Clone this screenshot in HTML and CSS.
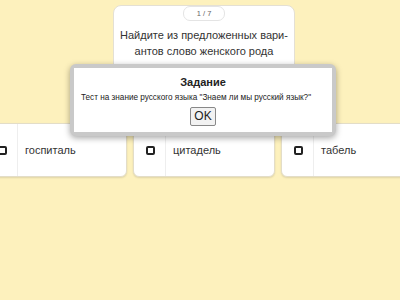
FILE: index.html
```html
<!DOCTYPE html>
<html lang="ru">
<head>
    <meta charset="UTF-8">
    <title>Тест</title>
    <link rel="stylesheet" href="styles.css">
</head>
<body>

    <!-- Question -->
    <div class="question-card">
        <div class="counter">1 / 7</div>
        <p class="question-text">Найдите из предложенных вари-<br>антов слово женского рода</p>
    </div>

    <!-- Answers -->
    <div class="options">
        <div class="option">
            <div class="check"><span class="box"></span></div>
            <div class="label">госпиталь</div>
        </div>
        <div class="option">
            <div class="check"><span class="box"></span></div>
            <div class="label">цитадель</div>
        </div>
        <div class="option">
            <div class="check"><span class="box"></span></div>
            <div class="label">табель</div>
        </div>
    </div>

    <!-- Alert dialog -->
    <div class="dialog">
        <div class="dialog-inner">
            <h1>Задание</h1>
            <p>Тест на знание русского языка "Знаем ли мы русский язык?"</p>
            <button>OK</button>
        </div>
    </div>

</body>
</html>
```

FILE: styles.css
```css
body {
    margin: 0;
    background: #fdf1bd;
    font-family: "Liberation Sans", Arial, sans-serif;
    color: #333;
    height: 300px;
    overflow: hidden;
    position: relative;
}
.question-card {
    margin: 5px 0 0 113px;
    width: 182px;
    height: 112px;
    box-sizing: border-box;
    background: #fff;
    border: 1px solid #e4e0d4;
    border-radius: 8px;
    display: flex;
    flex-direction: column;
    align-items: center;
}
.counter {
    margin-top: 0;
    padding: 2px 13px;
    font-size: 7.5px;
    line-height: 9px;
    color: #666;
    border: 1px solid #e4e4e4;
    border-radius: 7px;
}
.question-text {
    margin: 6px 0 0;
    font-size: 11px;
    line-height: 16px;
    white-space: nowrap;
    text-align: center;
    color: #333;
}
.options {
    display: flex;
    gap: 6px;
    margin: 6px 0 0 -15px;
}
.option {
    flex: 0 0 142px;
    height: 54px;
    box-sizing: border-box;
    background: #fff;
    border: 1px solid #e3ddc8;
    border-radius: 6px;
    box-shadow: 0 1px 2px rgba(0, 0, 0, 0.12);
    display: flex;
}
.check {
    width: 31px;
    border-right: 1px solid #eee;
    display: flex;
    align-items: center;
    justify-content: center;
}
.box {
    width: 5px;
    height: 5px;
    border: 2px solid #222;
    border-radius: 2px;
    margin-left: 2px;
}
.label {
    padding-left: 7px;
    display: flex;
    align-items: center;
    font-size: 11px;
    color: #333;
}
.dialog {
    position: absolute;
    left: 70px;
    top: 64px;
    width: 266px;
    height: 72px;
    box-sizing: border-box;
    padding: 4px;
    background: #c9c9c9;
    border-radius: 6px;
    box-shadow: 0 2px 6px rgba(0, 0, 0, 0.35);
}
.dialog-inner {
    height: 100%;
    background: #fff;
    text-align: center;
}
.dialog h1 {
    margin: 0;
    padding-top: 8px;
    font-size: 11px;
    line-height: 13px;
    color: #222;
}
.dialog p {
    margin: 4px 0 0;
    padding-left: 7px;
    text-align: left;
    font-size: 8.2px;
    color: #222;
}
.dialog button {
    margin-top: 5px;
    padding: 2px 3px;
    font-family: "Liberation Sans", Arial, sans-serif;
    font-size: 12px;
    line-height: 13px;
    color: #222;
    background: #f2f2f2;
    border: 1px solid #888;
    border-radius: 2px;
}
```
